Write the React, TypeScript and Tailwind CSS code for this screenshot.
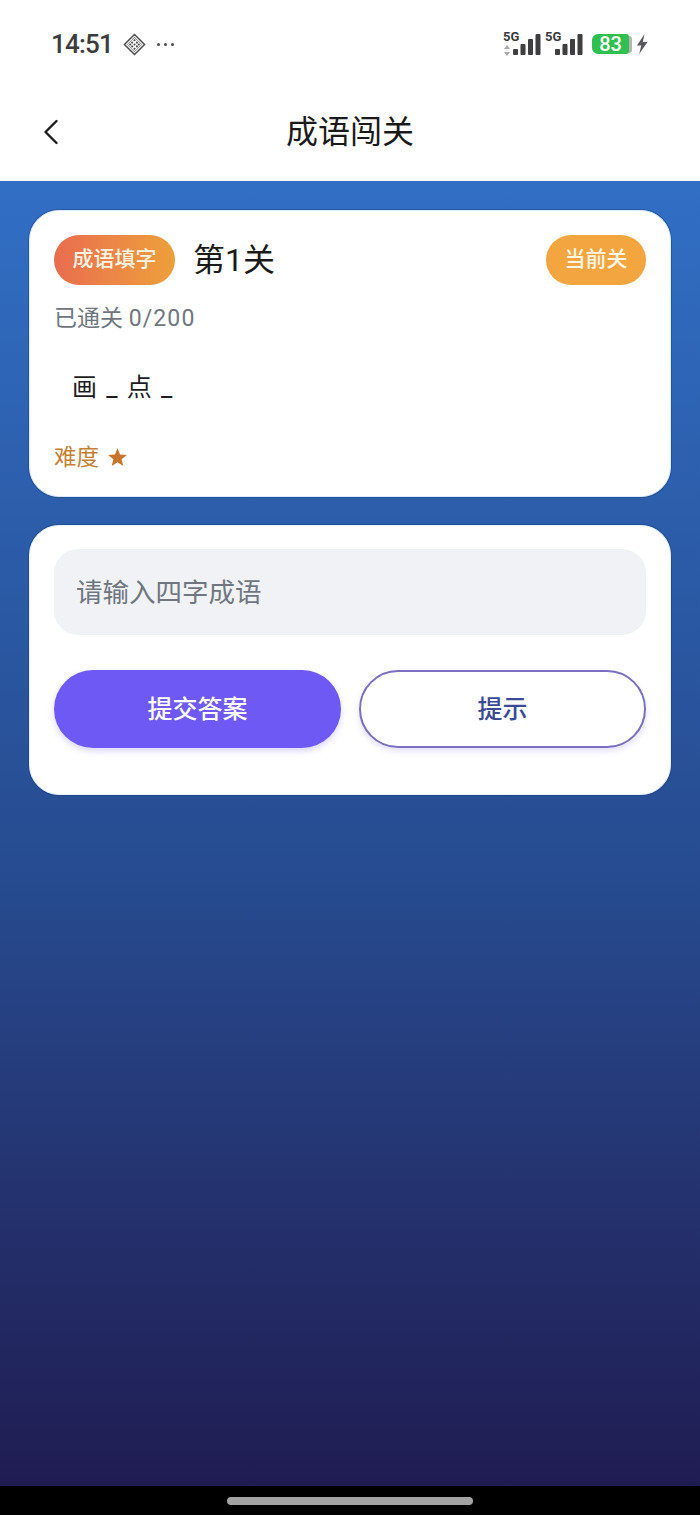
const cjk = 'font-["Roboto","Noto_Sans_CJK_SC",sans-serif]';

function SignalBars() {
  return (
    <svg width="28" height="22" viewBox="0 0 28 22" fill="#3f3f41">
      <rect x="0" y="15" width="5" height="6" rx="1" />
      <rect x="7.5" y="10" width="5" height="11" rx="1" />
      <rect x="15" y="5" width="5" height="16" rx="1" />
      <rect x="22.5" y="0" width="5" height="21" rx="1" />
    </svg>
  );
}

function StatusBar() {
  return (
    <div className="relative flex h-[88px] items-start justify-between pl-[51px] pr-[52px] pt-[26px]">
      <div className="flex items-center">
        <span className="font-['Roboto',sans-serif] text-[26px] leading-[36px] font-medium tracking-[-0.8px] text-[#3c3c3e]">14:51</span>
        <svg className="ml-[10px]" width="23" height="23" viewBox="0 0 24 24" fill="none" stroke="#4a4a4c" strokeWidth="1.5">
          <path d="M12 1.5 22.5 12 12 22.5 1.5 12Z" />
          <path d="M12 4.5 19.5 12 12 19.5 4.5 12Z" strokeWidth="0.7" />
          <g fill="#4a4a4c" stroke="none">
            <circle cx="12" cy="7.5" r="1.1" />
            <circle cx="9.5" cy="10" r="1.1" />
            <circle cx="14.5" cy="10" r="1.1" />
            <circle cx="7.5" cy="12" r="1.1" />
            <circle cx="12" cy="12" r="1.1" />
            <circle cx="16.5" cy="12" r="1.1" />
            <circle cx="9.5" cy="14" r="1.1" />
            <circle cx="14.5" cy="14" r="1.1" />
            <circle cx="12" cy="16.5" r="1.1" />
          </g>
        </svg>
        <div className="ml-[11px] flex gap-[4px]">
          <span className="h-[3px] w-[3px] rounded-full bg-[#4a4a4c]" />
          <span className="h-[3px] w-[3px] rounded-full bg-[#4a4a4c]" />
          <span className="h-[3px] w-[3px] rounded-full bg-[#4a4a4c]" />
        </div>
      </div>
      <div className="mt-[5px] flex items-center">
        <div className="relative h-[26px] w-[38px]">
          <span className="absolute left-0 top-[-1px] font-['Roboto',sans-serif] text-[13px] leading-[14px] font-bold text-[#3a3a3c]">5G</span>
          <svg className="absolute left-[1px] top-[14px]" width="6" height="11" viewBox="0 0 6 11" fill="#a8a8aa">
            <path d="M3 0 6 4H0ZM3 11 0 7H6Z" />
          </svg>
          <div className="absolute right-0 top-[3px]">
            <SignalBars />
          </div>
        </div>
        <div className="relative ml-[4px] h-[26px] w-[38px]">
          <span className="absolute left-0 top-[-1px] font-['Roboto',sans-serif] text-[13px] leading-[14px] font-bold text-[#3a3a3c]">5G</span>
          <div className="absolute right-0 top-[3px]">
            <SignalBars />
          </div>
        </div>
        <div className="ml-[9px] flex items-center">
          <div className="flex h-[20px] w-[37px] items-center justify-center rounded-l-[6px] rounded-r-[3px] bg-[#2fc04f] font-['Roboto',sans-serif] text-[20px] font-medium text-white">83</div>
          <div className="h-[17px] w-[3px] rounded-r-[3px] bg-[#b5b5b5]" />
        </div>
        <svg className="ml-[4px]" width="12" height="20" viewBox="0 0 12 20" fill="#5a5a5c">
          <path d="M8.5 0 1 11.5H5.2L3.2 20 11.5 8H6.8Z" />
        </svg>
      </div>
    </div>
  );
}

function NavBar() {
  return (
    <div className="relative flex h-[93px] items-center justify-center pb-[5px]">
      <svg className="absolute left-[43px] top-[30px]" width="18" height="28" viewBox="0 0 18 28" fill="none" stroke="#1c1c1e" strokeWidth="2.4" strokeLinecap="round" strokeLinejoin="round">
        <path d="M13.5 3 2.5 14 13.5 25" />
      </svg>
      <h1 className="text-[32px] leading-[44px] font-normal text-[#1a1a1a]">成语闯关</h1>
    </div>
  );
}

export default function App() {
  return (
    <div className={`flex h-[1515px] w-[700px] flex-col overflow-hidden bg-black ${cjk}`}>
      <header className="h-[181px] shrink-0 bg-white">
        <StatusBar />
        <NavBar />
      </header>

      <main className="flex h-[1305px] shrink-0 flex-col gap-[28px] bg-gradient-to-b from-[#316fc5] via-[#264a8e] via-55% to-[#1f1c52] px-[29px] pt-[29px]">
        {/* Level card */}
        <section className="h-[287px] rounded-[30px] border border-[#dcecff] bg-white px-[24px] pt-[24px] shadow-[0_0_0_1px_rgba(25,55,110,0.35)]">
          <div className="flex items-center">
            <span className="flex h-[50px] w-[121px] items-center justify-center rounded-full bg-gradient-to-r from-[#e96c4e] to-[#eda03a] text-[21px] font-medium text-[#fff4e4]">成语填字</span>
            <span className="ml-[18px] text-[32px] leading-[44px] text-[#1a1a1a]">第1关</span>
            <span className="ml-auto flex h-[50px] w-[100px] items-center justify-center rounded-full bg-[#f3a640] text-[21px] font-medium text-[#fff6e6]">当前关</span>
          </div>
          <p className="mt-[18px] text-[23px] leading-[32px] text-[#6f7680]">
            已通关 <span className="tracking-[1.1px]">0/200</span>
          </p>
          <p className="mt-[35px] pl-[18px] text-[25px] leading-[36px] whitespace-pre text-[#1d1d1f] [word-spacing:3px]">画 _ 点 _</p>
          <p className="mt-[35px] flex items-center text-[22.5px] leading-[32px] text-[#c47f32]">
            难度
            <svg className="ml-[9px]" width="19" height="18" viewBox="0 0 24 23" fill="#c8742a">
              <path d="M12 0 15.2 8.3 24 8.8 17.2 14.4 19.4 23 12 18.2 4.6 23 6.8 14.4 0 8.8 8.8 8.3Z" />
            </svg>
          </p>
        </section>

        {/* Answer card */}
        <section className="h-[270px] rounded-[30px] border border-[#e4f0ff] bg-white px-[24px] pt-[23px] shadow-[0_0_0_1px_rgba(25,55,110,0.35)]">
          <div className="flex h-[86px] items-center rounded-[24px] bg-[#f0f2f6] px-[22px] pt-[2px] text-[26.5px] text-[#6f7680]">请输入四字成语</div>
          <div className="mt-[35px] grid grid-cols-2 gap-[18px]">
            <button className="h-[78px] rounded-full bg-[#6f59f5] pt-[2px] text-[25px] font-medium text-white shadow-[0_3px_6px_rgba(111,89,245,0.25)]">提交答案</button>
            <button className="h-[78px] rounded-full border-2 border-[#7a70bf] bg-white pt-[2px] text-[25px] font-medium text-[#3c4a96] shadow-[0_3px_6px_rgba(111,89,245,0.2)]">提示</button>
          </div>
        </section>
      </main>

      <footer className="flex flex-1 items-start justify-center pt-[11px]">
        <div className="h-[8px] w-[246px] rounded-full bg-[#a3a3a3]" />
      </footer>
    </div>
  );
}
